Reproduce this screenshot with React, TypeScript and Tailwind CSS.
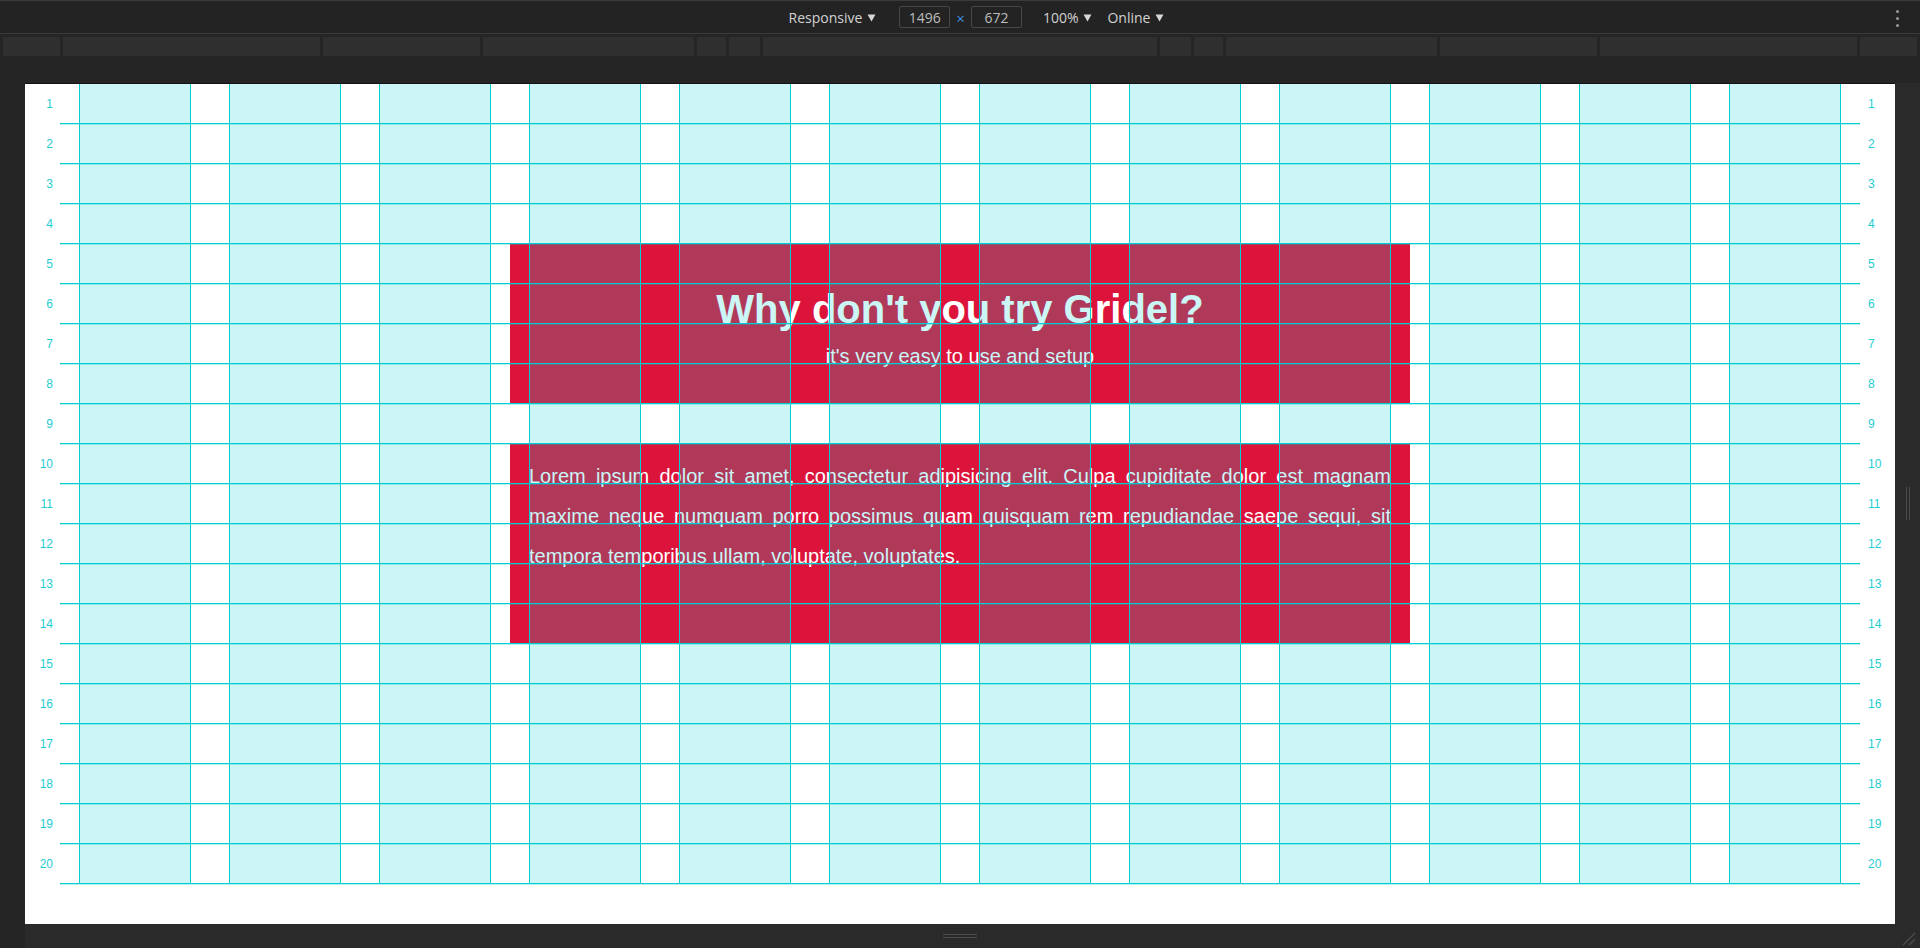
import React from 'react'

const rows = Array.from({ length: 20 }, (_, i) => i + 1)
const cols = Array.from({ length: 12 }, (_, i) => i)

// media-query bar segments (widths in px), separated by 3px gaps
const segments = [57, 257, 157, 211, 29, 31, 394, 31, 29, 211, 157, 257, 57]

function Caret() {
  return (
    <svg width="9" height="8" viewBox="0 0 9 8" className="ml-[5px] mt-[1px]">
      <path d="M0.5 0.5 H8.5 L4.5 7.5 Z" fill="#d6d6d6" />
    </svg>
  )
}

function Toolbar() {
  return (
    <div className="relative h-[34px] border-t border-b border-[#3a3a3a] bg-[#232323] flex items-center justify-center font-['Open_Sans','Noto_Sans',sans-serif] text-[14px] text-[#d2d2d2]">
      <div className="flex items-center ml-[33px]">
        <span className="flex items-center">Responsive<Caret /></span>
        <div className="ml-[23px] w-[51px] h-[22px] border border-[#474747] rounded-[2px] flex items-center justify-center text-[#bdbdbd]">1496</div>
        <span className="mx-[6px] text-[#3d8fe0] text-[15px] leading-none mt-[3px]">×</span>
        <div className="w-[51px] h-[22px] border border-[#474747] rounded-[2px] flex items-center justify-center text-[#bdbdbd]">672</div>
        <span className="ml-[21px] flex items-center">100%<Caret /></span>
        <span className="ml-[15px] flex items-center">Online<Caret /></span>
      </div>
      <div className="absolute right-[21px] top-[9px] flex flex-col gap-[4px]">
        <span className="w-[3px] h-[3px] rounded-full bg-[#9a9a9a]" />
        <span className="w-[3px] h-[3px] rounded-full bg-[#9a9a9a]" />
        <span className="w-[3px] h-[3px] rounded-full bg-[#9a9a9a]" />
      </div>
    </div>
  )
}

function SegmentBar() {
  return (
    <div className="mt-[3px] h-[19px] flex gap-[3px] pl-[3px]">
      {segments.map((w, i) => (
        <div key={i} className="h-full bg-[#2f2f2f] shrink-0" style={{ width: w }} />
      ))}
    </div>
  )
}

function GridOverlay() {
  return (
    <div className="absolute inset-0 flex pointer-events-none">
      <div className="w-[35px] flex flex-col">
        {rows.map((r) => (
          <div key={r} className="h-[40px] flex items-center justify-end pr-[7px] text-[12px] text-[#1fcdd2]">{r}</div>
        ))}
      </div>
      <div className="relative w-[1800px]">
        <div className="flex flex-col">
          {rows.map((r) => (
            <div key={r} className="h-[40px] border-b border-[#00ced1] shadow-[0_1px_0_rgba(0,206,209,0.3)]" />
          ))}
        </div>
        <div className="absolute left-0 top-0 w-full h-[800px] grid grid-cols-12">
          {cols.map((c) => (
            <div key={c} className="px-[19px] h-full">
              <div className="h-full bg-[rgba(0,206,209,0.2)] border-x border-[#00ced1]" />
            </div>
          ))}
        </div>
      </div>
      <div className="w-[35px] flex flex-col">
        {rows.map((r) => (
          <div key={r} className="h-[40px] flex items-center pl-[8px] text-[12px] text-[#1fcdd2]">{r}</div>
        ))}
      </div>
    </div>
  )
}

export default function App() {
  return (
    <div className="w-[1920px] h-[948px] overflow-hidden bg-[#252525] flex flex-col font-['Liberation_Sans',Arial,sans-serif]">
      <Toolbar />
      <SegmentBar />

      <div className="mt-[27px] flex">
        <div className="w-[25px] shrink-0" />
        <div className="relative w-[1870px] h-[841px] bg-white border-t border-[#111] shadow-[0_1px_0_#4a4a4a]">
          <div className="pt-[160px] pl-[485px]">
            <div className="w-[900px] h-[160px] bg-[#dc143c] flex flex-col items-center text-white">
              <h1 className="pt-[45px] text-[40px] leading-[40px] font-bold">Why don't you try Gridel?</h1>
              <p className="mt-[7px] text-[20px] leading-[40px]">it's very easy to use and setup</p>
            </div>
            <div className="mt-[40px] w-[900px] h-[200px] bg-[#dc143c] px-[19px] pt-[12px]">
              <p className="text-[20px] leading-[40px] text-white text-justify">
                Lorem ipsum dolor sit amet, consectetur adipisicing elit. Culpa cupiditate dolor est magnam maxime neque numquam porro possimus quam quisquam rem repudiandae saepe sequi, sit tempora temporibus ullam, voluptate, voluptates.
              </p>
            </div>
          </div>
          <GridOverlay />
        </div>
        <div className="flex-1 bg-[#2a2a2a] flex items-center justify-center gap-[2px]">
          <span className="w-px h-[33px] bg-[#4d4d4d]" />
          <span className="w-px h-[33px] bg-[#4d4d4d]" />
        </div>
      </div>

      <div className="relative flex-1 bg-[#2a2a2a] ml-[25px] pr-[25px] flex flex-col items-center justify-center gap-[2px]">
        <span className="w-[34px] h-px bg-[#4d4d4d]" />
        <span className="w-[34px] h-px bg-[#4d4d4d]" />
        <svg width="16" height="16" viewBox="0 0 16 16" className="absolute right-[4px] bottom-[2px]">
          <path d="M15 3 L3 15 M15 9 L9 15" stroke="#4a4a4a" strokeWidth="1.5" />
        </svg>
      </div>
    </div>
  )
}
